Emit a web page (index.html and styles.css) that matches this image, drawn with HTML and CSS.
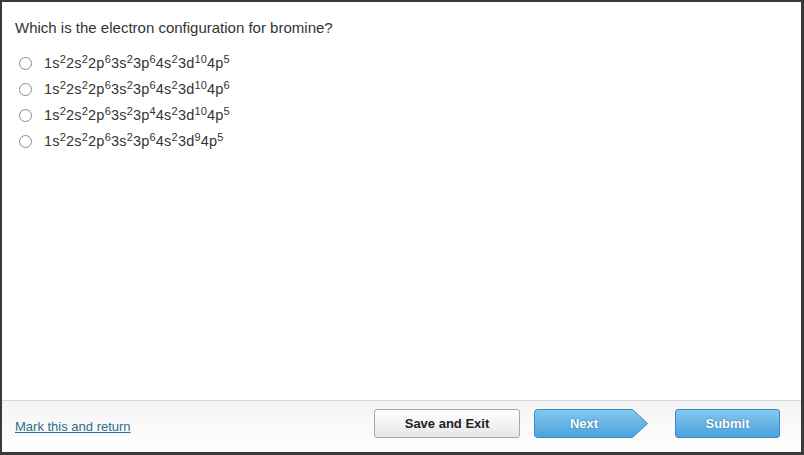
FILE: index.html
```html
<!DOCTYPE html>
<html>
<head>
<meta charset="utf-8">
<link rel="stylesheet" href="styles.css">
</head>
<body>
<div class="frame">
  <main class="content">
    <p class="question">Which is the electron configuration for bromine?</p>
    <ul class="options">
      <li class="option"><span class="radio"></span><span class="label">1s<sup>2</sup>2s<sup>2</sup>2p<sup>6</sup>3s<sup>2</sup>3p<sup>6</sup>4s<sup>2</sup>3d<sup>10</sup>4p<sup>5</sup></span></li>
      <li class="option"><span class="radio"></span><span class="label">1s<sup>2</sup>2s<sup>2</sup>2p<sup>6</sup>3s<sup>2</sup>3p<sup>6</sup>4s<sup>2</sup>3d<sup>10</sup>4p<sup>6</sup></span></li>
      <li class="option"><span class="radio"></span><span class="label">1s<sup>2</sup>2s<sup>2</sup>2p<sup>6</sup>3s<sup>2</sup>3p<sup>4</sup>4s<sup>2</sup>3d<sup>10</sup>4p<sup>5</sup></span></li>
      <li class="option"><span class="radio"></span><span class="label">1s<sup>2</sup>2s<sup>2</sup>2p<sup>6</sup>3s<sup>2</sup>3p<sup>6</sup>4s<sup>2</sup>3d<sup>9</sup>4p<sup>5</sup></span></li>
    </ul>
  </main>
  <footer class="footer">
    <a class="mark" href="#">Mark this and return</a>
    <div class="buttons">
      <span class="btn btn-save">Save and Exit</span>
      <span class="btn-next">
        <svg class="next-shape" width="115" height="29" viewBox="0 0 115 29">
          <defs>
            <linearGradient id="gb" x1="0" y1="0" x2="0" y2="1">
              <stop offset="0" stop-color="#85c9f0"/>
              <stop offset="1" stop-color="#4aa2dc"/>
            </linearGradient>
          </defs>
          <path d="M3.5 0.5 H98.5 L113.5 14.5 L98.5 28.5 H3.5 Q0.5 28.5 0.5 25.5 V3.5 Q0.5 0.5 3.5 0.5 Z" fill="url(#gb)" stroke="#3b8cc4" stroke-width="1"/>
        </svg>
        <span class="next-text">Next</span>
      </span>
      <span class="btn btn-submit">Submit</span>
    </div>
  </footer>
</div>
</body>
</html>
```

FILE: styles.css
```css
html, body {
  margin: 0;
  padding: 0;
  background: #fff;
}

.frame {
  width: 804px;
  height: 455px;
  box-sizing: border-box;
  border-style: solid;
  border-color: #3a3a3a;
  border-width: 2px 3px 3px 2px;
  display: flex;
  flex-direction: column;
  font-family: "Liberation Sans", Arial, sans-serif;
  color: #333;
}

.content {
  flex: 1;
  padding: 16px 13px 0 13px;
}

.question {
  margin: 0;
  font-size: 15px;
  line-height: 20px;
  color: #333;
}

.options {
  list-style: none;
  margin: 12px 0 0 0;
  padding: 0;
}

.option {
  display: flex;
  align-items: center;
  height: 26px;
}

.radio {
  width: 11px;
  height: 11px;
  border: 1px solid #8a8a8a;
  border-radius: 50%;
  background: #fff;
  margin-left: 4px;
  margin-right: 12px;
  flex: none;
}

.label {
  font-size: 14.5px;
  line-height: 20px;
  color: #333;
  letter-spacing: 0.2px;
}

.label sup {
  font-size: 11px;
  line-height: 0;
  vertical-align: 5px;
}

.footer {
  height: 51px;
  border-top: 1px solid #d8d8d8;
  background: linear-gradient(#f4f4f4, #ffffff);
  display: flex;
  align-items: flex-start;
  justify-content: space-between;
  padding: 0 21px 0 13px;
}

.mark {
  margin-top: 18px;
  font-size: 13px;
  line-height: 16px;
  color: #2b6f8f;
  text-decoration: underline;
}

.buttons {
  display: flex;
  align-items: center;
  margin-top: 8px;
}

.btn {
  box-sizing: border-box;
  height: 29px;
  display: flex;
  align-items: center;
  justify-content: center;
  font-size: 13px;
  font-weight: bold;
  border-radius: 3px;
}

.btn-save {
  width: 146px;
  border: 1px solid #a6a6a6;
  background: linear-gradient(#ffffff, #e6e6e6);
  color: #222;
}

.btn-next {
  position: relative;
  width: 115px;
  height: 29px;
  margin-left: 14px;
  display: flex;
  align-items: center;
  font-size: 13px;
  font-weight: bold;
  color: #fff;
}

.next-shape {
  position: absolute;
  left: 0;
  top: 0;
}

.next-text {
  position: relative;
  width: 100px;
  text-align: center;
  text-shadow: 0 0 2px rgba(40, 90, 140, 0.8);
}

.btn-submit {
  width: 105px;
  margin-left: 26px;
  border: 1px solid #3b8cc4;
  background: linear-gradient(#85c9f0, #4aa2dc);
  color: #fff;
  text-shadow: 0 0 2px rgba(40, 90, 140, 0.8);
}
```
